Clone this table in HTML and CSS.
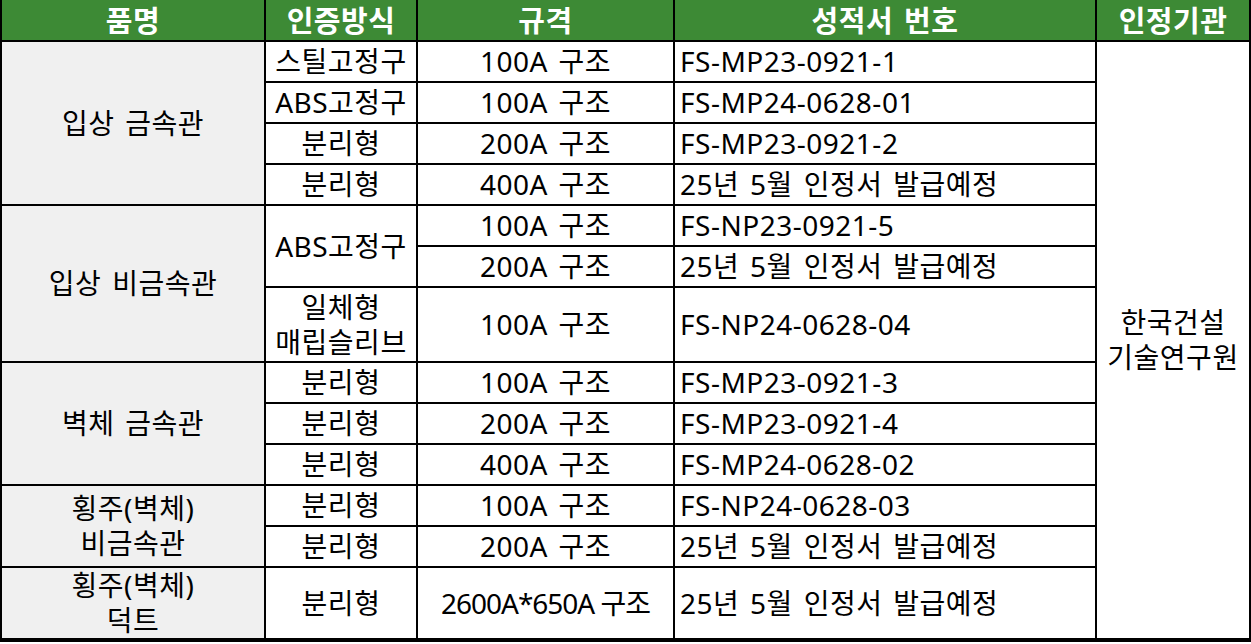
FILE: index.html
```html
<!DOCTYPE html>
<html lang="ko">
<head>
<meta charset="utf-8">
<link rel="stylesheet" href="styles.css">
</head>
<body>
<table class="cert">
  <colgroup>
    <col class="c1"><col class="c2"><col class="c3"><col class="c4"><col class="c5">
  </colgroup>
  <thead>
    <tr class="head">
      <th>품명</th><th>인증방식</th><th>규격</th><th>성적서 번호</th><th>인정기관</th>
    </tr>
  </thead>
  <tbody>
    <tr class="r">
      <td class="name" rowspan="4">입상 금속관</td>
      <td>스틸고정구</td><td>100A 구조</td><td class="no">FS-MP23-0921-1</td>
      <td class="org" rowspan="13">한국건설<br>기술연구원</td>
    </tr>
    <tr class="r"><td>ABS고정구</td><td>100A 구조</td><td class="no">FS-MP24-0628-01</td></tr>
    <tr class="r"><td>분리형</td><td>200A 구조</td><td class="no">FS-MP23-0921-2</td></tr>
    <tr class="r"><td>분리형</td><td>400A 구조</td><td class="no">25년 5월 인정서 발급예정</td></tr>
    <tr class="r">
      <td class="name" rowspan="3">입상 비금속관</td>
      <td rowspan="2">ABS고정구</td><td>100A 구조</td><td class="no">FS-NP23-0921-5</td>
    </tr>
    <tr class="r"><td>200A 구조</td><td class="no">25년 5월 인정서 발급예정</td></tr>
    <tr class="tall"><td>일체형<br>매립슬리브</td><td>100A 구조</td><td class="no">FS-NP24-0628-04</td></tr>
    <tr class="r">
      <td class="name" rowspan="3">벽체 금속관</td>
      <td>분리형</td><td>100A 구조</td><td class="no">FS-MP23-0921-3</td>
    </tr>
    <tr class="r"><td>분리형</td><td>200A 구조</td><td class="no">FS-MP23-0921-4</td></tr>
    <tr class="r"><td>분리형</td><td>400A 구조</td><td class="no">FS-MP24-0628-02</td></tr>
    <tr class="r">
      <td class="name" rowspan="2">횡주(벽체)<br>비금속관</td>
      <td>분리형</td><td>100A 구조</td><td class="no">FS-NP24-0628-03</td>
    </tr>
    <tr class="r"><td>분리형</td><td>200A 구조</td><td class="no">25년 5월 인정서 발급예정</td></tr>
    <tr class="last">
      <td class="name">횡주(벽체)<br>덕트</td>
      <td>분리형</td><td class="narrow">2600A*650A 구조</td><td class="no">25년 5월 인정서 발급예정</td>
    </tr>
  </tbody>
</table>
</body>
</html>
```
FILE: styles.css
```css
html, body {
  margin: 0;
  padding: 0;
  background: #ffffff;
}
.cert {
  width: 1250px;
  border-collapse: collapse;
  table-layout: fixed;
  font-family: "Noto Sans", "Noto Sans CJK KR", sans-serif;
  font-size: 28px;
  letter-spacing: 0.5px;
  word-spacing: 3px;
  color: #000;
  border-right: 4px solid #000;
  border-bottom: 4px solid #000;
}
.c1 { width: 264px; }
.c2 { width: 152px; }
.c3 { width: 257px; }
.c4 { width: 422px; }
.c5 { width: 155px; }
.cert th, .cert td {
  border: 2px solid #000;
  padding: 0;
  text-align: center;
  vertical-align: middle;
  line-height: 35px;
  overflow: hidden;
  white-space: nowrap;
}
.cert th {
  background: #3d8a35;
  color: #fff;
  font-weight: 700;
  font-size: 29px;
  height: 40px;
  border-top: 0;
}
.cert tr.r td { height: 39px; }
.cert tr.tall td { height: 73px; }
.cert tr.last td { height: 70px; }
.cert td.name { background: #f0f0f0; }
.cert td.no { text-align: left; padding-left: 5px; }
.cert td.narrow { letter-spacing: -1px; word-spacing: 0; }
.cert td.org { line-height: 35px; }
```
